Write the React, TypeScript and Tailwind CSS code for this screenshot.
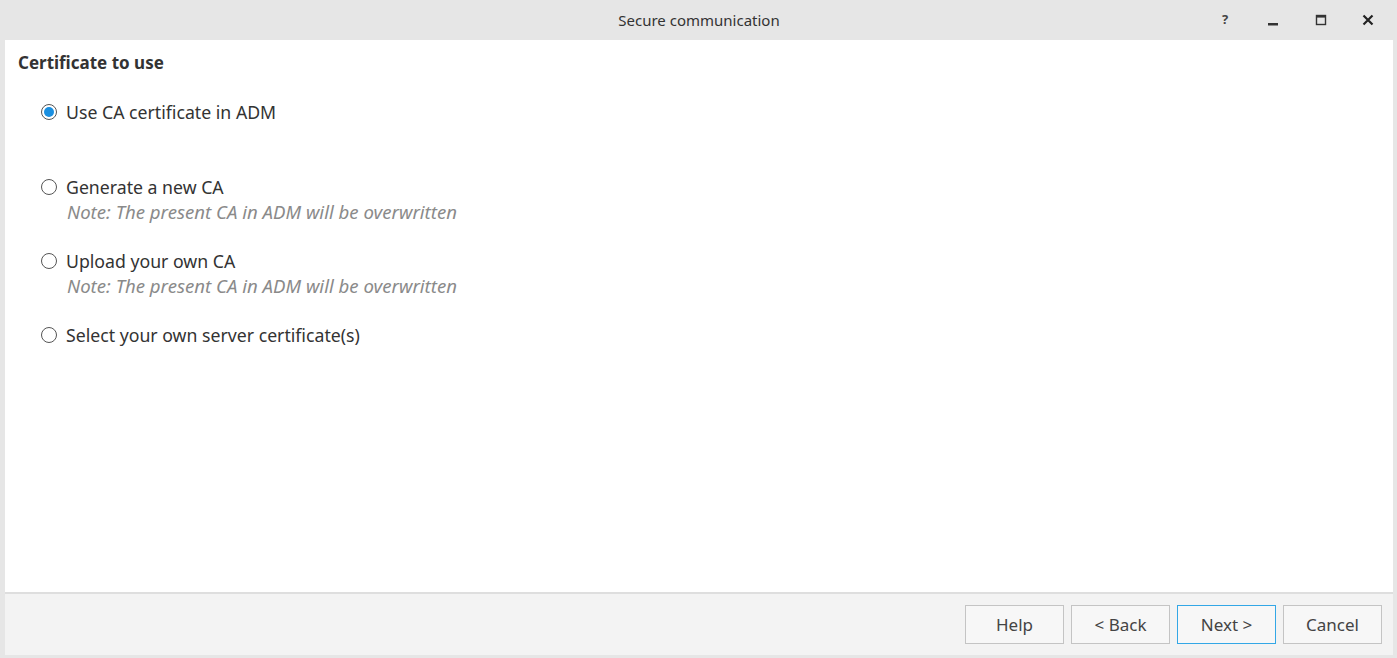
import React from "react";

const font = { fontFamily: '"Noto Sans", "Open Sans", sans-serif' };

function Radio({ checked }: { checked?: boolean }) {
  return (
    <span className="relative inline-flex h-[16px] w-[16px] shrink-0 items-center justify-center rounded-full border border-[#555] bg-white">
      {checked && <span className="h-[10px] w-[10px] rounded-full bg-[#1a8fe0]" />}
    </span>
  );
}

function Option({ label, note, checked }: { label: string; note?: string; checked?: boolean }) {
  return (
    <div className="flex flex-col">
      <div className="flex h-[24px] items-center gap-[9px]">
        <Radio checked={checked} />
        <span className="text-[17.7px] text-[#333]">{label}</span>
      </div>
      {note && (
        <div className="ml-[26px] h-[25px] text-[18.6px] italic leading-[25px] text-[#8a8a8a]">{note}</div>
      )}
    </div>
  );
}

function Btn({ label, focused }: { label: string; focused?: boolean }) {
  return (
    <button
      className={
        "h-[39px] w-[99px] border bg-[#f7f7f7] text-[17px] text-[#444] " +
        (focused ? "border-[#33a7e6]" : "border-[#c4c4c4]")
      }
    >
      {label}
    </button>
  );
}

export default function App() {
  return (
    <div style={font} className="flex h-[658px] w-[1397px] flex-col bg-[#e6e6e6] pl-[5px] pr-[4px] pb-[3px]">
      <div className="relative flex h-[40px] shrink-0 items-center justify-center">
        <span className="text-[15px] text-[#333]">Secure communication</span>
        <div className="absolute right-0 top-0 flex h-[40px] items-center">
          <span className="flex w-[48px] justify-center text-[13px] font-bold text-[#444]">?</span>
          <span className="flex w-[48px] justify-center">
            <svg width="12" height="12" viewBox="0 0 12 12"><rect x="1" y="9" width="10" height="2.5" fill="#333" /></svg>
          </span>
          <span className="flex w-[48px] justify-center">
            <svg width="12" height="12" viewBox="0 0 12 12"><rect x="1.5" y="1.5" width="9" height="9" fill="none" stroke="#333" strokeWidth="1.4" /><rect x="1" y="1" width="10" height="2.6" fill="#333" /></svg>
          </span>
          <span className="flex w-[48px] justify-center pr-[2px]">
            <svg width="12" height="12" viewBox="0 0 12 12"><path d="M1.5 1.5 L10.5 10.5 M10.5 1.5 L1.5 10.5" stroke="#222" strokeWidth="2.2" /></svg>
          </span>
        </div>
      </div>
      <div className="flex flex-1 flex-col bg-white">
        <div className="flex-1 pl-[13px] pt-[11px]">
          <div className="text-[17px] font-bold leading-[24px] text-[#333]">Certificate to use</div>
          <div className="ml-[23px] mt-[25px] flex flex-col">
            <Option label="Use CA certificate in ADM" checked />
            <div className="h-[51px]" />
            <Option label="Generate a new CA" note="Note: The present CA in ADM will be overwritten" />
            <div className="h-[25px]" />
            <Option label="Upload your own CA" note="Note: The present CA in ADM will be overwritten" />
            <div className="h-[25px]" />
            <Option label="Select your own server certificate(s)" />
          </div>
        </div>
        <div className="flex h-[63px] shrink-0 items-center justify-end gap-[7px] border-t-2 border-[#dedede] bg-[#f3f3f3] pr-[11px]">
          <Btn label="Help" />
          <Btn label="< Back" />
          <Btn label="Next >" focused />
          <Btn label="Cancel" />
        </div>
      </div>
    </div>
  );
}
